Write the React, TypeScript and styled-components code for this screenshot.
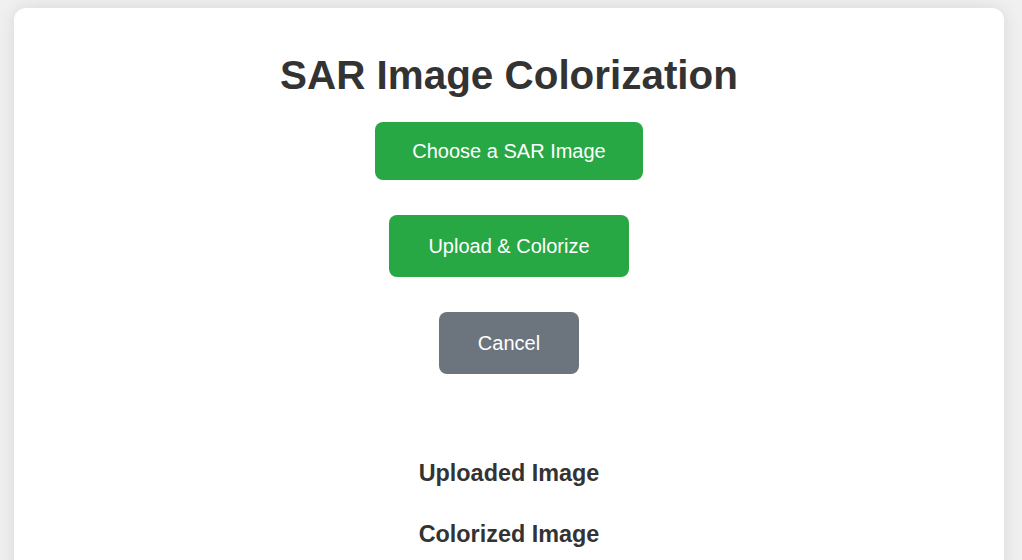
import React from "react";
import styled, { createGlobalStyle } from "styled-components";

const GlobalStyle = createGlobalStyle`
  html, body {
    margin: 0;
    padding: 0;
    background: #f0f0f0;
    font-family: "Liberation Sans", Arial, sans-serif;
    font-size: 20px;
    color: #333333;
  }
  * { box-sizing: border-box; }
`;

const Page = styled.div`
  padding: 8px 18px 0 14px;
  height: 560px;
  overflow: hidden;
`;

const Card = styled.div`
  background: #ffffff;
  border-radius: 12px;
  box-shadow: 0 0 18px rgba(0, 0, 0, 0.1);
  padding: 44px 20px 60px;
  display: flex;
  flex-direction: column;
  align-items: center;
  min-height: 620px;
`;

const Title = styled.h1`
  margin: 0;
  font-size: 40.4px;
  line-height: 46px;
  font-weight: 700;
  color: #333333;
  text-align: center;
`;

const Button = styled.button<{ $variant: "primary" | "secondary"; $compact?: boolean; $top: number }>`
  margin-top: ${(p) => p.$top}px;
  height: ${(p) => (p.$compact ? 58 : 62)}px;
  padding: 0 ${(p) => (p.$compact ? 37 : 39)}px;
  border: none;
  border-radius: 8px;
  background: ${(p) => (p.$variant === "primary" ? "#28a745" : "#6c757d")};
  color: #ffffff;
  font-family: "Liberation Sans", Arial, sans-serif;
  font-size: 20px;
  line-height: 24px;
  cursor: pointer;
`;

const SectionHeading = styled.h3<{ $top: number }>`
  margin: ${(p) => p.$top}px 0 0;
  font-size: 23.4px;
  line-height: 27px;
  font-weight: 700;
  color: #333333;
  text-align: center;
`;

export default function App() {
  return (
    <>
      <GlobalStyle />
      <Page>
        <Card>
          <Title>SAR Image Colorization</Title>
          <Button $variant="primary" $compact $top={24}>Choose a SAR Image</Button>
          <Button $variant="primary" $top={35}>Upload &amp; Colorize</Button>
          <Button $variant="secondary" $top={35}>Cancel</Button>
          <SectionHeading $top={86}>Uploaded Image</SectionHeading>
          <SectionHeading $top={34}>Colorized Image</SectionHeading>
        </Card>
      </Page>
    </>
  );
}
